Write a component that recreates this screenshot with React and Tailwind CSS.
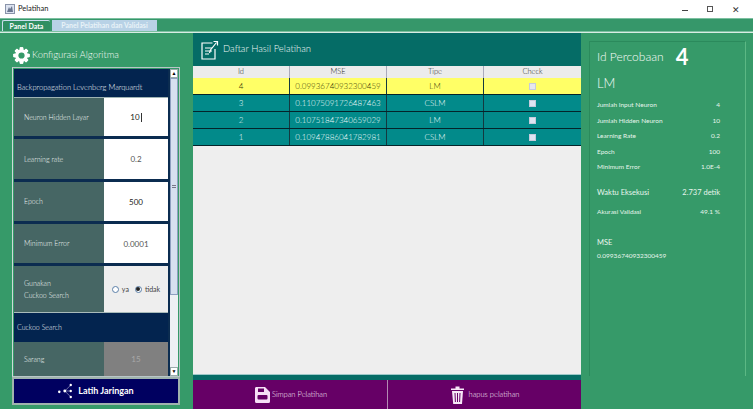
import React from "react";

const font = { fontFamily: '"Lato","Open Sans",sans-serif' };

function Gear() {
  const teeth = [0, 45, 90, 135, 180, 225, 270, 315];
  return (
    <svg width="17" height="17" viewBox="0 0 24 24">
      {teeth.map((a) => (
        <rect key={a} x="9.5" y="0.5" width="5" height="23" rx="1" fill="#fff" transform={`rotate(${a} 12 12)`} />
      ))}
      <circle cx="12" cy="12" r="9" fill="#fff" />
      <circle cx="12" cy="12" r="4.4" fill="#369a69" />
    </svg>
  );
}

function NoteIcon() {
  return (
    <svg width="19" height="20" viewBox="0 0 19 20" fill="none" stroke="#fff" strokeWidth="1.2">
      <path d="M12.5 3H2v16h13V9" />
      <path d="M5 8h7M5 11h7M5 14h4" />
      <path d="M9.5 13l1-3 6-7.5M13.5 1.5h4v4" />
    </svg>
  );
}

function SaveIcon() {
  return (
    <svg width="15" height="16" viewBox="0 0 15 16">
      <path d="M1 0h9l5 5v9.5a1.5 1.5 0 0 1-1.5 1.5h-12A1.5 1.5 0 0 1 0 14.5v-13A1.5 1.5 0 0 1 1 0z" fill="#f7dff7" />
      <rect x="3" y="1.5" width="6" height="3.5" fill="#660066" />
      <rect x="2.5" y="8" width="10" height="4.5" rx="1" fill="#660066" />
    </svg>
  );
}

function TrashIcon() {
  return (
    <svg width="13" height="18" viewBox="0 0 13 18" fill="#f7e8f7">
      <path d="M0 2.5h13v1.5H0zM4.5 0.5h4v2h-4z" />
      <path d="M1 5h11l-1 13H2.2z" />
      <path d="M4 7l.4 9M6.5 7v9M9 7l-.4 9" stroke="#660066" strokeWidth="1" />
    </svg>
  );
}

function NetIcon() {
  return (
    <svg width="17" height="16" viewBox="0 0 20 18" fill="#fff">
      <circle cx="1.5" cy="10" r="1.5" />
      <circle cx="8" cy="9" r="1.7" />
      <circle cx="15" cy="2" r="1.4" />
      <circle cx="15" cy="9" r="1.4" />
      <circle cx="15" cy="16" r="1.4" />
      <path d="M8 9L15 2M8 9h7M8 9l7 7" stroke="#fff" strokeWidth="0.5" />
    </svg>
  );
}

function FormRow({ label, value, h, valueClass = "text-[#555]" }) {
  return (
    <div className={`flex ${h} shrink-0 border-b-[3px] border-[#0b2c50]`}>
      <div className="flex w-[90px] items-center bg-[#466664] pl-[10px] text-[7px] font-light text-[#f2f7f6]">{label}</div>
      <div className={`flex w-[64px] items-center justify-center bg-white text-[8px] ${valueClass}`}>{value}</div>
    </div>
  );
}

function Radio({ checked, label }) {
  return (
    <span className="flex items-center gap-[3px]">
      <span className="flex h-[7px] w-[7px] items-center justify-center rounded-full border border-[#5a7fa8] bg-white">
        {checked && <span className="h-[4px] w-[4px] rounded-full bg-[#222]" />}
      </span>
      {label}
    </span>
  );
}

function LeftPanel() {
  return (
    <div className="flex w-[193px] shrink-0 flex-col pl-[12px] pr-[13px] pt-[12px]">
      <div className="flex h-[21px] items-center gap-[2px] pl-[1px]">
        <Gear />
        <span className="text-[9.5px] font-light text-[#f2f9f5]">Konfigurasi Algoritma</span>
      </div>
      <div className="mt-[1px] flex h-[310px] border border-[#b9c6c8] border-l-[#cfd8d8] pl-[1px] pt-[1px]">
        <div className="flex w-[156px] shrink-0 flex-col overflow-hidden border-r-2 border-[#0b2c50]">
          <div className="flex h-[28px] shrink-0 items-end bg-[#03244f] pb-[4px] pl-[3px] text-[7.5px] font-light text-[#f0f4f8]">
            Backpropagation Levenberg Marquardt
          </div>
          <div className="h-[1px] shrink-0 bg-[#9fb3b3]" />
          <FormRow
            label="Neuron Hidden Layar"
            value={
              <span className="flex items-center">
                10<span className="ml-[1px] h-[9px] w-[1px] bg-[#333]" />
              </span>
            }
            h="h-[41px]"
            valueClass="text-[#222]"
          />
          <FormRow label="Learning rate" value="0.2" h="h-[43px]" />
          <FormRow label="Epoch" value="500" h="h-[42px]" valueClass="text-[#222]" />
          <FormRow label="Minimum Error" value="0.0001" h="h-[42px]" />
          <div className="flex h-[47px] shrink-0 border-b border-[#a9bbbb]">
            <div className="flex w-[90px] flex-col justify-center gap-[4px] bg-[#466664] pl-[10px] text-[7px] font-light leading-[8px] text-[#f2f7f6]">
              <span>Gunakan</span>
              <span>Cuckoo Search</span>
            </div>
            <div className="flex w-[64px] items-center justify-center gap-[6px] bg-[#eeeeee] text-[7px] text-[#444]">
              <Radio label="ya" />
              <Radio checked label="tidak" />
            </div>
          </div>
          <div className="flex h-[29px] shrink-0 items-center bg-[#03244f] pl-[3px] text-[7px] font-light text-[#f0f4f8]">
            Cuckoo Search
          </div>
          <div className="flex min-h-0 flex-1">
            <div className="flex w-[90px] items-center bg-[#466664] pl-[10px] text-[7px] font-light text-[#f2f7f6]">Sarang</div>
            <div className="flex w-[64px] items-center justify-center bg-[#808080] text-[8px] text-[#a8a8a8]">15</div>
          </div>
        </div>
        <div className="flex w-[8px] shrink-0 flex-col bg-[#eef0f4]">
          <div className="flex h-[9px] shrink-0 items-center justify-center border border-[#9aa] bg-white text-[5px] leading-none text-black">▲</div>
          <div className="flex h-[217px] shrink-0 items-center justify-center border border-[#8d9fc0] bg-[#d6e0f0]">
            <div className="h-[3px] w-[4px] border-y border-[#778]" />
          </div>
          <div className="flex-1" />
          <div className="flex h-[9px] shrink-0 items-center justify-center border border-[#9aa] bg-white text-[5px] leading-none text-black">▼</div>
        </div>
      </div>
      <div className="flex h-[28px] items-center justify-center gap-[3px] border-2 border-[#9fb3ad] bg-[#000060] text-[9px] font-bold text-white">
        <NetIcon />
        <span>Latih Jaringan</span>
      </div>
    </div>
  );
}

const rows = [
  { id: "4", mse: "0.09936740932300459", tipe: "LM", sel: true },
  { id: "3", mse: "0.11075091726487463", tipe: "CSLM" },
  { id: "2", mse: "0.10751847340659029", tipe: "LM" },
  { id: "1", mse: "0.10947886041782981", tipe: "CSLM" },
];

function MiddlePanel() {
  return (
    <div className="flex w-[388px] shrink-0 flex-col">
      <div className="flex h-[33px] shrink-0 items-center gap-[4px] bg-[#056c66] pl-[7px]">
        <NoteIcon />
        <span className="text-[9.5px] font-light text-[#f0f8f7]">Daftar Hasil Pelatihan</span>
      </div>
      <div className="flex min-h-0 flex-1 flex-col bg-[#eeeeee]">
        <div className="grid h-[12px] grid-cols-4 bg-[#ececec] text-center text-[7.5px] font-light leading-[12px] text-[#222]">
          {["Id", "MSE", "Tipe", "Check"].map((h, i) => (
            <div key={h} className={i < 3 ? "border-r border-[#aab]" : ""}>{h}</div>
          ))}
        </div>
        {rows.map((r) => (
          <div
            key={r.id}
            className={`grid h-[17px] grid-cols-4 border-b border-[#04242a] text-center text-[8px] font-light leading-[16px] ${
              r.sel ? "bg-[#ffff66] text-[#3c3c08]" : "bg-[#028a8a] text-[#eefafa]"
            }`}
          >
            <div className="border-r border-[#14393f]">{r.id}</div>
            <div className="border-r border-[#14393f]">{r.mse}</div>
            <div className="border-r border-[#14393f]">{r.tipe}</div>
            <div className="flex items-center justify-center">
              <span className={`h-[7px] w-[7px] border border-[#c5cbdc] ${r.sel ? "bg-[#e6e6ee]" : "bg-[#dfe4f2]"}`} />
            </div>
          </div>
        ))}
        <div className="flex-1 border-b border-[#9cc8c8]" />
      </div>
      <div className="h-[5px] shrink-0 bg-[#056c66]" />
      <div className="flex h-[29px] shrink-0 bg-[#660066] text-[7.5px] font-light text-[#fbeefb]">
        <div className="flex w-[195px] items-center justify-center gap-[2px] border-r border-[#b48ab4] pl-[2px]">
          <SaveIcon />
          <span>Simpan Pelatihan</span>
        </div>
        <div className="flex flex-1 items-center justify-center gap-[5px] pl-[1px]">
          <TrashIcon />
          <span>hapus pelatihan</span>
        </div>
      </div>
    </div>
  );
}

function Stat({ label, value, cls = "" }) {
  return (
    <div className={`flex justify-between text-[6.5px] text-[#e6f5ec] ${cls}`}>
      <span>{label}</span>
      <span>{value}</span>
    </div>
  );
}

function RightPanel() {
  return (
    <div className="min-w-0 flex-1 pb-[2px] pl-[8px] pr-[7px] pt-[8px]">
      <div className="h-[335px] border-r border-t border-l border-[#5cb884] border-l-[#2b8a5c] border-t-[#2b8a5c] pl-[7px] pr-[25px]">
        <div className="flex h-[28px] items-center gap-[12px] pt-[2px] font-light text-[#f6fbf8]">
          <span className="text-[12px]">Id Percobaan</span>
          <span className="text-[22px] font-bold leading-none text-white">4</span>
        </div>
        <div className="mt-[5px] text-[13px] font-light leading-[16px] text-[#f6fbf8]">LM</div>
        <div className="mt-[9px] flex flex-col gap-[6px] leading-[9.5px]">
          <Stat label="Jumlah Input Neuron" value="4" />
          <Stat label="Jumlah Hidden Neuron" value="10" />
          <Stat label="Learning Rate" value="0.2" />
          <Stat label="Epoch" value="100" />
          <Stat label="Minimum Error" value="1.0E-4" />
        </div>
        <Stat label="Waktu Eksekusi" value="2.737 detik" cls="mt-[15px] text-[7.5px]" />
        <Stat label="Akurasi Validasi" value="49.1 %" cls="mt-[9px]" />
        <div className="mt-[20px] text-[7.5px] text-[#e6f5ec]">MSE</div>
        <div className="mt-[3px] text-[6.5px] text-[#e6f5ec]">0.09936740932300459</div>
      </div>
    </div>
  );
}

export default function App() {
  return (
    <div className="flex h-[409px] w-[753px] flex-col overflow-hidden bg-white" style={font}>
      <div className="flex h-[18px] shrink-0 items-center pl-[5px] text-[7.5px] text-[#222]">
        <svg width="10" height="10" viewBox="0 0 10 10" className="mr-[3px]">
          <rect x="0.5" y="0.5" width="9" height="9" fill="#dde3f0" stroke="#8a94aa" />
          <path d="M2 8l2-5 1 2 2-3 1 6z" fill="#6a7690" />
        </svg>
        <span>Pelatihan</span>
        <div className="ml-auto flex items-center gap-[19px] pr-[13px] text-[#333]">
          <span className="h-[1px] w-[6px] translate-y-[1px] bg-[#444]" />
          <span className="h-[6px] w-[6px] border border-[#555]" />
          <span className="text-[9px] leading-none">✕</span>
        </div>
      </div>
      <div className="flex h-[14px] shrink-0 items-end gap-[2px] border-y border-[#7cc0a0] bg-[#36976a] pl-[2px]">
        <div className="flex h-[11px] w-[48px] items-center justify-center rounded-t-[2px] border-t border-l border-[#cde] bg-[#2f8f62] text-[7px] font-bold text-white">
          Panel Data
        </div>
        <div className="flex h-[11px] w-[105px] items-center justify-center bg-[#b8d2e6] text-[7px] font-bold text-[#e8f2f8]">
          Panel Pelatihan dan Validasi
        </div>
      </div>
      <div className="h-[1px] shrink-0 bg-[#d8ece4]" />
      <div className="flex min-h-0 flex-1 bg-[#369a69]">
        <LeftPanel />
        <MiddlePanel />
        <RightPanel />
      </div>
    </div>
  );
}
